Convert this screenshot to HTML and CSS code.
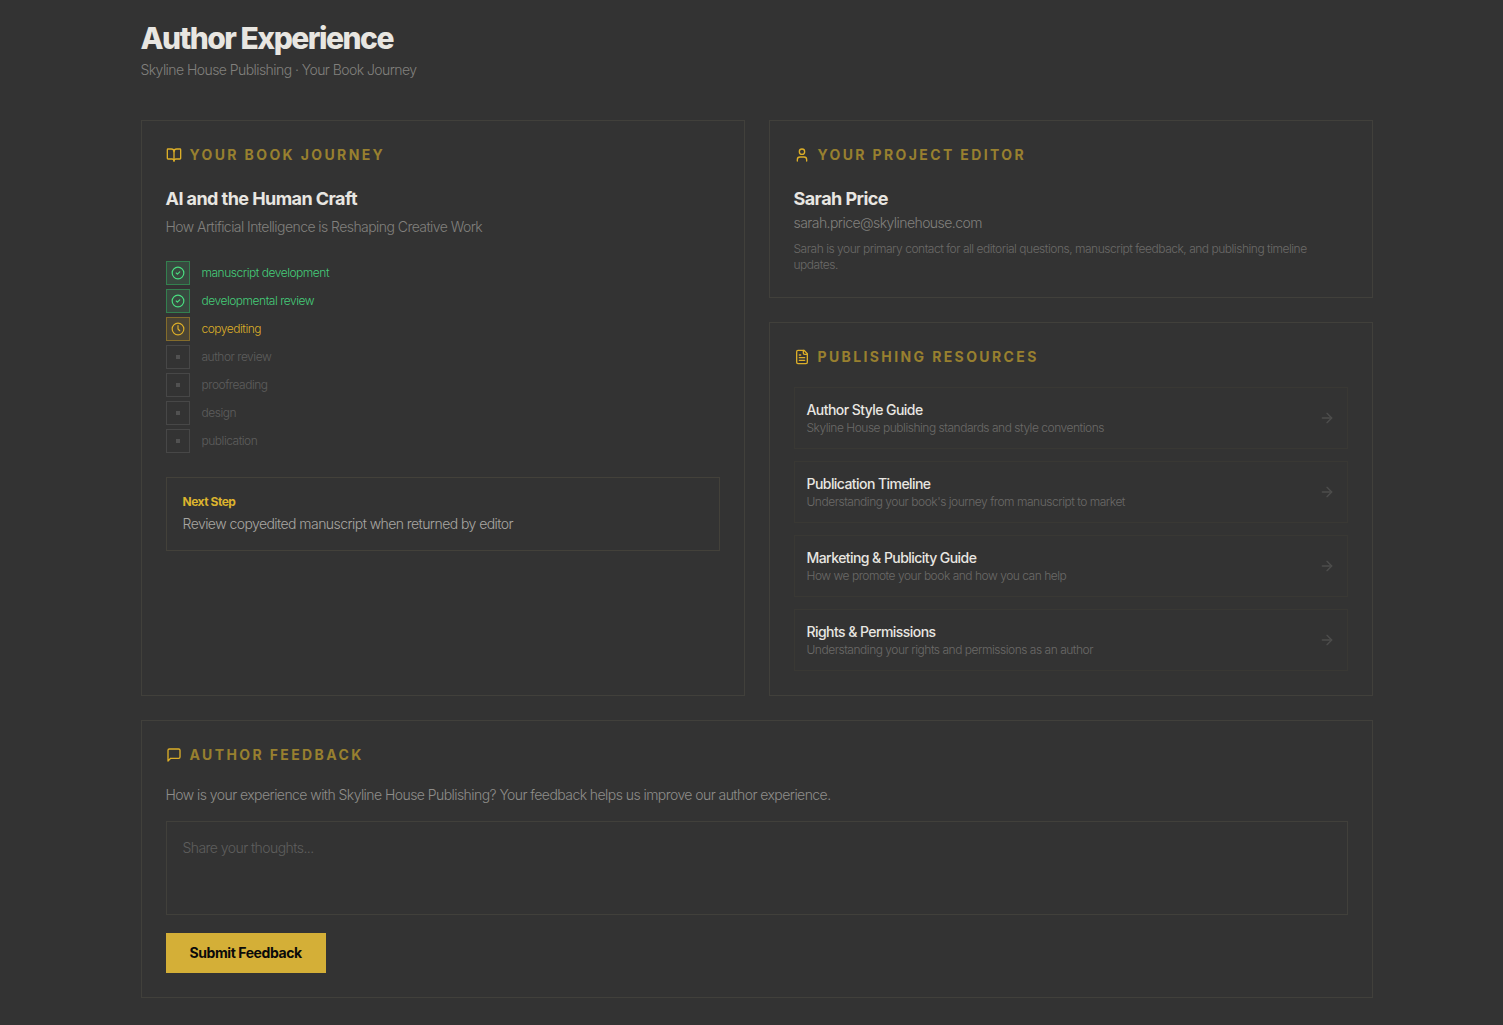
FILE: index.html
```html
<!DOCTYPE html>
<html lang="en">
<head>
    <meta charset="UTF-8">
    <meta name="viewport" content="width=device-width, initial-scale=1.0">
    <title>Author Experience</title>
    <link rel="stylesheet" href="styles.css">
</head>
<body>
    <main class="container">
        <header class="page-header">
            <h1>Author Experience</h1>
            <p>Skyline House Publishing · Your Book Journey</p>
        </header>

        <div class="grid">
            <!-- Book journey -->
            <section class="card">
                <h2 class="card-title">
                    <svg class="icon" viewBox="0 0 24 24"><path d="M12 7v14"/><path d="M3 18a1 1 0 0 1-1-1V4a1 1 0 0 1 1-1h5a4 4 0 0 1 4 4 4 4 0 0 1 4-4h5a1 1 0 0 1 1 1v13a1 1 0 0 1-1 1h-6a3 3 0 0 0-3 3 3 3 0 0 0-3-3z"/></svg>
                    <span>Your Book Journey</span>
                </h2>
                <h3 class="name">AI and the Human Craft</h3>
                <p class="book-subtitle">How Artificial Intelligence is Reshaping Creative Work</p>

                <ul class="steps">
                    <li class="step done">
                        <span class="step-box"><svg class="icon-small" viewBox="0 0 24 24"><circle cx="12" cy="12" r="10"/><path d="m9 12 2 2 4-4"/></svg></span>
                        manuscript development
                    </li>
                    <li class="step done">
                        <span class="step-box"><svg class="icon-small" viewBox="0 0 24 24"><circle cx="12" cy="12" r="10"/><path d="m9 12 2 2 4-4"/></svg></span>
                        developmental review
                    </li>
                    <li class="step current">
                        <span class="step-box"><svg class="icon-small" viewBox="0 0 24 24"><circle cx="12" cy="12" r="10"/><path d="M12 6v6l3 3"/></svg></span>
                        copyediting
                    </li>
                    <li class="step"><span class="step-box"><span class="dot"></span></span>author review</li>
                    <li class="step"><span class="step-box"><span class="dot"></span></span>proofreading</li>
                    <li class="step"><span class="step-box"><span class="dot"></span></span>design</li>
                    <li class="step"><span class="step-box"><span class="dot"></span></span>publication</li>
                </ul>

                <div class="next-step">
                    <h4>Next Step</h4>
                    <p>Review copyedited manuscript when returned by editor</p>
                </div>
            </section>

            <div class="column">
                <!-- Editor contact -->
                <section class="card">
                    <h2 class="card-title">
                        <svg class="icon" viewBox="0 0 24 24"><path d="M19 21v-2a4 4 0 0 0-4-4H9a4 4 0 0 0-4 4v2"/><circle cx="12" cy="7" r="4"/></svg>
                        <span>Your Project Editor</span>
                    </h2>
                    <h3 class="name">Sarah Price</h3>
                    <a class="email" href="mailto:sarah.price@skylinehouse.com">sarah.price@skylinehouse.com</a>
                    <p class="note">Sarah is your primary contact for all editorial questions, manuscript feedback, and publishing timeline updates.</p>
                </section>

                <!-- Resources -->
                <section class="card">
                    <h2 class="card-title">
                        <svg class="icon" viewBox="0 0 24 24"><path d="M15 2H6a2 2 0 0 0-2 2v16a2 2 0 0 0 2 2h12a2 2 0 0 0 2-2V7Z"/><path d="M14 2v4a2 2 0 0 0 2 2h4"/><path d="M10 9H8"/><path d="M16 13H8"/><path d="M16 17H8"/></svg>
                        <span>Publishing Resources</span>
                    </h2>
                    <nav class="resources">
                        <a class="resource" href="#">
                            <span>
                                <span class="resource-name">Author Style Guide</span>
                                <span class="resource-text">Skyline House publishing standards and style conventions</span>
                            </span>
                            <svg class="icon" viewBox="0 0 24 24"><path d="M5 12h14"/><path d="m12 5 7 7-7 7"/></svg>
                        </a>
                        <a class="resource" href="#">
                            <span>
                                <span class="resource-name">Publication Timeline</span>
                                <span class="resource-text">Understanding your book's journey from manuscript to market</span>
                            </span>
                            <svg class="icon" viewBox="0 0 24 24"><path d="M5 12h14"/><path d="m12 5 7 7-7 7"/></svg>
                        </a>
                        <a class="resource" href="#">
                            <span>
                                <span class="resource-name">Marketing &amp; Publicity Guide</span>
                                <span class="resource-text">How we promote your book and how you can help</span>
                            </span>
                            <svg class="icon" viewBox="0 0 24 24"><path d="M5 12h14"/><path d="m12 5 7 7-7 7"/></svg>
                        </a>
                        <a class="resource" href="#">
                            <span>
                                <span class="resource-name">Rights &amp; Permissions</span>
                                <span class="resource-text">Understanding your rights and permissions as an author</span>
                            </span>
                            <svg class="icon" viewBox="0 0 24 24"><path d="M5 12h14"/><path d="m12 5 7 7-7 7"/></svg>
                        </a>
                    </nav>
                </section>
            </div>
        </div>

        <!-- Feedback form -->
        <section class="card">
            <h2 class="card-title">
                <svg class="icon" viewBox="0 0 24 24"><path d="M21 15a2 2 0 0 1-2 2H7l-4 4V5a2 2 0 0 1 2-2h14a2 2 0 0 1 2 2z"/></svg>
                <span>Author Feedback</span>
            </h2>
            <form class="feedback">
                <label for="feedback">How is your experience with Skyline House Publishing? Your feedback helps us improve our author experience.</label>
                <textarea id="feedback" rows="3" placeholder="Share your thoughts..."></textarea>
                <button type="button">Submit Feedback</button>
            </form>
        </section>
    </main>
</body>
</html>
```
FILE: styles.css
```css
* {
    box-sizing: border-box;
    margin: 0;
    padding: 0;
}

body {
    background-color: #333333;
    color: #e8e6e1;
    font-family: Inter, sans-serif;
    font-size: 14px;
    font-weight: 300;
    line-height: 20px;
    letter-spacing: -0.04em;
    padding-left: 10px;
}

.container {
    max-width: 1280px;
    margin: 0 auto;
    padding: 20px 24px 24px;
}

.page-header {
    margin-bottom: 40px;
}

.page-header h1 {
    font-size: 30px;
    font-weight: 800;
    line-height: 36px;
    letter-spacing: -0.05em;
    margin-bottom: 4px;
}

.page-header p,
.book-subtitle,
.email {
    color: #81807d;
}

.grid {
    display: grid;
    grid-template-columns: 1fr 1fr;
    gap: 24px;
    margin-bottom: 24px;
}

.column {
    display: flex;
    flex-direction: column;
    gap: 24px;
}

.card {
    border: 1px solid #41403b;
    padding: 24px;
}

.card-title {
    display: flex;
    align-items: center;
    gap: 8px;
    margin-bottom: 20px;
    color: #98802f;
    font-size: 14px;
    font-weight: 700;
    letter-spacing: 0.17em;
    text-transform: uppercase;
}

.icon,
.icon-small {
    width: 16px;
    height: 16px;
    flex-shrink: 0;
    fill: none;
    stroke: currentColor;
    stroke-width: 2;
    stroke-linecap: round;
    stroke-linejoin: round;
}

.icon-small {
    width: 14px;
    height: 14px;
}

.card-title .icon {
    color: #dcae28;
}

.name {
    font-size: 18px;
    font-weight: 700;
    line-height: 28px;
}

.book-subtitle {
    margin-top: 4px;
}

/* Small text */
.step,
.note,
.resource-text,
.next-step h4 {
    font-size: 12px;
    line-height: 16px;
    letter-spacing: -0.04em;
}

/* Journey steps */
.steps {
    display: flex;
    flex-direction: column;
    gap: 4px;
    margin: 24px 0;
    list-style: none;
}

.step {
    display: flex;
    align-items: center;
    gap: 12px;
    color: #5e5e5d;
}

.step-box {
    display: flex;
    align-items: center;
    justify-content: center;
    width: 24px;
    height: 24px;
    border: 1px solid #474747;
}

.dot {
    width: 4px;
    height: 4px;
    background-color: #515151;
}

.done {
    color: #45cc79;
}

.done .step-box {
    color: #4ade80;
    background-color: #38493f;
    border-color: #33804f;
}

.current {
    color: #dcae28;
}

.current .step-box {
    background-color: #4a4434;
    border-color: #846c2b;
}

.next-step {
    border: 1px solid #43413a;
    padding: 16px;
    color: #a8a6a2;
}

.next-step h4 {
    margin-bottom: 4px;
    color: #dcb42e;
    font-weight: 700;
}

/* Editor */
.email {
    display: block;
    text-decoration: none;
}

.note {
    margin-top: 8px;
    color: #6b6a68;
}

/* Resources */
.resources {
    display: flex;
    flex-direction: column;
    gap: 12px;
}

.resource {
    display: flex;
    align-items: center;
    justify-content: space-between;
    border: 1px solid #393834;
    padding: 12px;
    color: #4d4d4c;
    text-decoration: none;
}

.resource:hover {
    border-color: #846c2b;
}

.resource-name {
    display: block;
    color: #e8e6e1;
    font-weight: 500;
}

.resource-text {
    display: block;
    color: #6b6a68;
}

/* Feedback */
.feedback {
    display: flex;
    flex-direction: column;
    align-items: flex-start;
}

.feedback label {
    margin-bottom: 16px;
    color: #8e8d8a;
}

.feedback textarea {
    display: block;
    width: 100%;
    margin-bottom: 18px;
    padding: 16px;
    background-color: transparent;
    border: 1px solid #41403b;
    color: #e8e6e1;
    font: inherit;
    letter-spacing: inherit;
    resize: none;
}

.feedback textarea::placeholder {
    color: #5e5e5d;
}

.feedback button {
    padding: 10px 24px;
    background-color: #d4af37;
    border: none;
    color: #0a0a0a;
    font: inherit;
    font-weight: 700;
    letter-spacing: -0.03em;
    cursor: pointer;
}
```
